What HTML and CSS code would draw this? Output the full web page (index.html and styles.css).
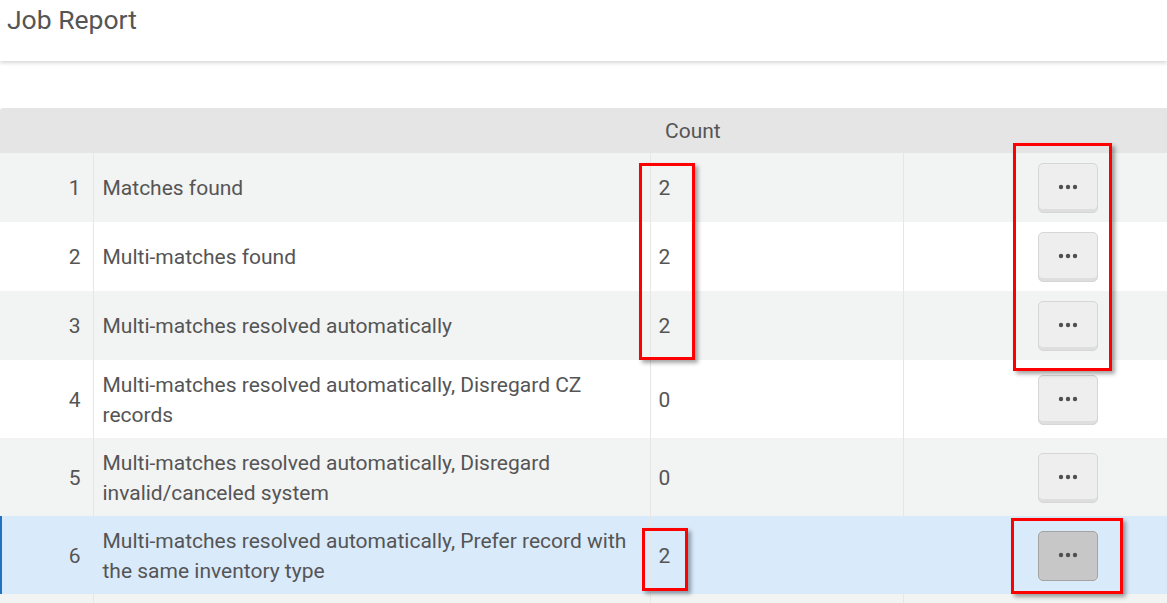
FILE: index.html
```html
<!DOCTYPE html>
<html>
<head>
<meta charset="utf-8">
<link rel="stylesheet" href="styles.css">
</head>
<body>
<div class="topbar"><h1 class="title">Job Report</h1></div>
<div class="report">
  <table class="grid">
    <colgroup>
      <col class="c-idx"><col class="c-name"><col class="c-count"><col class="c-act">
    </colgroup>
    <thead>
      <tr><th></th><th></th><th class="h-count">Count</th><th></th></tr>
    </thead>
    <tbody>
      <tr class="odd"><td class="idx">1</td><td class="name">Matches found</td><td class="count">2</td><td class="act"><button class="more"><svg width="20" height="6" viewBox="0 0 20 6"><circle cx="3" cy="3" r="2.2"/><circle cx="10" cy="3" r="2.2"/><circle cx="17" cy="3" r="2.2"/></svg></button></td></tr>
      <tr class="even"><td class="idx">2</td><td class="name">Multi-matches found</td><td class="count">2</td><td class="act"><button class="more"><svg width="20" height="6" viewBox="0 0 20 6"><circle cx="3" cy="3" r="2.2"/><circle cx="10" cy="3" r="2.2"/><circle cx="17" cy="3" r="2.2"/></svg></button></td></tr>
      <tr class="odd"><td class="idx">3</td><td class="name">Multi-matches resolved automatically</td><td class="count">2</td><td class="act"><button class="more"><svg width="20" height="6" viewBox="0 0 20 6"><circle cx="3" cy="3" r="2.2"/><circle cx="10" cy="3" r="2.2"/><circle cx="17" cy="3" r="2.2"/></svg></button></td></tr>
      <tr class="even"><td class="idx">4</td><td class="name">Multi-matches resolved automatically, Disregard CZ records</td><td class="count">0</td><td class="act"><button class="more"><svg width="20" height="6" viewBox="0 0 20 6"><circle cx="3" cy="3" r="2.2"/><circle cx="10" cy="3" r="2.2"/><circle cx="17" cy="3" r="2.2"/></svg></button></td></tr>
      <tr class="odd"><td class="idx">5</td><td class="name">Multi-matches resolved automatically, Disregard invalid/canceled system</td><td class="count">0</td><td class="act"><button class="more"><svg width="20" height="6" viewBox="0 0 20 6"><circle cx="3" cy="3" r="2.2"/><circle cx="10" cy="3" r="2.2"/><circle cx="17" cy="3" r="2.2"/></svg></button></td></tr>
      <tr class="selected"><td class="idx">6</td><td class="name">Multi-matches resolved automatically, Prefer record with the same inventory type</td><td class="count">2</td><td class="act"><button class="more active"><svg width="20" height="6" viewBox="0 0 20 6"><circle cx="3" cy="3" r="2.2"/><circle cx="10" cy="3" r="2.2"/><circle cx="17" cy="3" r="2.2"/></svg></button></td></tr>
      <tr class="odd filler"><td></td><td></td><td></td><td></td></tr>
    </tbody>
  </table>
  <div class="mark mark-1"></div>
  <div class="mark mark-2"></div>
  <div class="mark mark-3"></div>
  <div class="mark mark-4"></div>
</div>
</body>
</html>
```
FILE: styles.css
```css
html, body {
  margin: 0;
  padding: 0;
  overflow: hidden;
  background: #ffffff;
}
body {
  font-family: Roboto, "Liberation Sans", Arial, sans-serif;
  color: #555555;
  width: 1167px;
  height: 603px;
}
.topbar {
  height: 61px;
  background: #ffffff;
  box-shadow: 0 2px 4px rgba(0, 0, 0, 0.16);
  position: relative;
  z-index: 1;
}
.title {
  margin: 0;
  padding: 4px 0 0 7px;
  font-size: 26.5px;
  font-weight: 400;
  line-height: 32px;
  color: #555555;
}
.report {
  position: relative;
  margin-top: 47px;
}
.grid {
  width: 1167px;
  border-collapse: collapse;
  table-layout: fixed;
  font-size: 21px;
}
.c-idx { width: 93px; }
.c-name { width: 557px; }
.c-count { width: 253px; }
.c-act { width: 264px; }
thead tr {
  background: #e5e5e5;
  height: 45px;
}
thead th {
  font-weight: 400;
  text-align: left;
  padding: 0;
  color: #555555;
}
thead th:first-child { border-top-left-radius: 3px; }
.h-count { padding-left: 15px; }
tbody td {
  padding: 10px 8px 9px 9px;
  line-height: 29.5px;
  vertical-align: middle;
  border-left: 1px solid #e6e6e6;
}
tbody td.name, tbody td.idx, tbody td.count {
  padding-top: 11px;
  padding-bottom: 8px;
}
tbody td:first-child { border-left: none; }
.odd { background: #f2f3f3; }
.even { background: #ffffff; }
.selected { background: #d9eafb; }
.selected td:first-child { box-shadow: inset 2px 0 0 #1f73c1; }
td.idx {
  text-align: right;
  padding-right: 12px;
}
td.count { padding-left: 8px; }
td.act { padding-left: 134px; }
.filler td { height: 20px; padding: 0; }
.more {
  display: flex;
  align-items: center;
  justify-content: center;
  width: 60px;
  height: 50px;
  padding: 0;
  border: 1px solid #d6d6d6;
  border-radius: 5px;
  background: #eeeeee;
  box-shadow: inset 0 -3px 0 #dedede;
  fill: #505050;
}
.more.active {
  background: #c7c7c7;
  border-color: #a3a3a3;
  box-shadow: none;
}
.more svg { display: block; margin-top: -2px; }
.mark {
  position: absolute;
  border: 3px solid #ff0000;
  box-shadow: 3px 3px 4px rgba(0, 0, 0, 0.35);
  box-sizing: border-box;
}
.mark-1 { left: 639px; top: 55px; width: 56px; height: 197px; }
.mark-2 { left: 1013px; top: 35px; width: 99px; height: 228px; }
.mark-3 { left: 642px; top: 420px; width: 46px; height: 63px; }
.mark-4 { left: 1011px; top: 410px; width: 112px; height: 76px; }
```
